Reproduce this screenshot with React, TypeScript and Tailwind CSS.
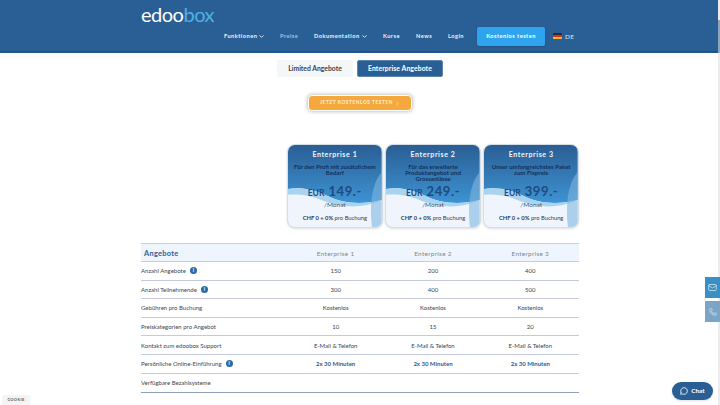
import { ChevronDown, ChevronRight, Mail, MessageCircle, Phone } from "lucide-react";

const plans = [
  { name: "Enterprise 1", text: "Für den Profi mit zusätzlichem Bedarf", price: "149.-" },
  { name: "Enterprise 2", text: "Für das erweiterte Produktangebot und Grossanlässe", price: "249.-" },
  { name: "Enterprise 3", text: "Unser umfangreichstes Paket zum Fixpreis", price: "399.-" },
];

const rows = [
  { label: "Anzahl Angebote", info: true, values: ["150", "200", "400"] },
  { label: "Anzahl Teilnehmende", info: true, values: ["300", "400", "500"] },
  { label: "Gebühren pro Buchung", values: ["Kostenlos", "Kostenlos", "Kostenlos"] },
  { label: "Preiskategorien pro Angebot", values: ["10", "15", "20"] },
  { label: "Kontakt zum edoobox Support", values: ["E-Mail & Telefon", "E-Mail & Telefon", "E-Mail & Telefon"] },
  { label: "Persönliche Online-Einführung", info: true, link: true, values: ["2x 30 Minuten", "2x 30 Minuten", "2x 30 Minuten"] },
  { label: "Verfügbare Bezahlsysteme", values: ["", "", ""] },
];

function NavItem({ label, caret, muted, width }: { label: string; caret?: boolean; muted?: boolean; width: string }) {
  return (
    <span className={`flex items-center justify-between ${width} ${muted ? "text-[#a9c1da]" : "text-[#eef4fa]"}`}>
      {label}
      {caret && <ChevronDown className="h-[7px] w-[7px]" strokeWidth={3} />}
    </span>
  );
}

function PlanCard({ name, text, price }: { name: string; text: string; price: string }) {
  return (
    <div className="relative h-[84px] flex-1 overflow-hidden rounded-lg border border-[#d5dde6] bg-[#f0f5fd] shadow-sm">
      <svg className="absolute inset-0 h-full w-full" viewBox="0 0 96 84" preserveAspectRatio="none">
        <defs>
          <linearGradient id="planBg" x1="0" y1="0" x2="0" y2="1">
            <stop offset="0" stopColor="#2a5e94" />
            <stop offset="1" stopColor="#3d93d3" />
          </linearGradient>
        </defs>
        <path d="M0 0H96V56C78 61 58 61 40 52C26 45 12 43 0 45Z" fill="url(#planBg)" />
        <path d="M0 45C12 43 26 45 40 52C58 61 78 61 96 56C76 66 54 64 36 57C22 51 10 50 0 51Z" fill="#a9d4f1" />
        <path d="M96 28C87 38 83 58 86 84H96Z" fill="#7fb6df" opacity="0.6" />
      </svg>
      <div className="relative flex h-full flex-col items-center px-1 pt-[4px] text-center">
        <div className="text-[7px] font-bold leading-[11px] tracking-[0.6px] text-[#f2f6fb]">{name}</div>
        <div className="mt-[4px] h-[20px] text-[6.1px] font-bold leading-[6px] text-[#14305a]">{text}</div>
        <div className="-mt-[1px] flex items-baseline gap-[4px] text-[#1f4a7e]">
          <span className="text-[8.5px] font-bold">EUR</span>
          <span className="text-[13px] font-bold leading-[17px] tracking-[0.6px]">{price}</span>
        </div>
        <div className="text-[6.5px] leading-[10px] text-[#45586f]">/Monat</div>
        <div className="mt-[2.5px] text-[5.8px] leading-[10px] text-[#2c3e50]">
          <b>CHF 0 + 0%</b> pro Buchung
        </div>
      </div>
    </div>
  );
}

export default function App() {
  return (
    <div className="relative h-[405px] w-[720px] overflow-hidden bg-white font-['Lato',sans-serif]">
      <header className="flex h-[53px] justify-center border-b-2 border-[#24558a] bg-[#2a5f95]">
        <div className="flex w-[438px] flex-col">
          <div className="h-[26px] pt-[1px] text-[20px] font-normal leading-[26px] tracking-[-0.5px] text-white">
            edoo<span className="text-[#4fb0e6]">box</span>
          </div>
          <nav className="mt-[1px] flex h-[19px] items-center justify-end gap-[15px] whitespace-nowrap pr-[5px] text-[5.6px] font-bold tracking-[0.5px]">
            <NavItem label="Funktionen" caret width="w-[41px]" />
            <NavItem label="Preise" muted width="w-[19px]" />
            <NavItem label="Dokumentation" caret width="w-[54px]" />
            <NavItem label="Kurse" width="w-[18px]" />
            <NavItem label="News" width="w-[17px]" />
            <NavItem label="Login" width="w-[18px]" />
            <span className="-ml-[4px] flex h-[19px] w-[68px] items-center justify-center rounded-[2px] bg-[#2ea3ee] text-white shadow">
              Kostenlos testen
            </span>
            <span className="-ml-[7px] flex w-[21px] items-center gap-[3px] text-[6.4px] font-normal text-[#dce8f3]">
              <span className="flex h-[6px] w-[9px] shrink-0 flex-col overflow-hidden rounded-[1px]">
                <span className="flex-1 bg-[#2b2b2b]" />
                <span className="flex-1 bg-[#d3312c]" />
                <span className="flex-1 bg-[#f5bd2e]" />
              </span>
              DE
            </span>
          </nav>
        </div>
      </header>

      <main className="mx-auto flex w-[438px] flex-col">
        <div className="mt-[7px] flex justify-center gap-[4px] text-[6.8px] font-bold">
          <span className="flex h-[17px] w-[76px] items-center justify-center rounded-[2px] bg-[#f5f6f7] text-[#3b4450]">
            Limited Angebote
          </span>
          <span className="flex h-[17px] w-[86px] items-center justify-center rounded-[2px] border border-[#5d85ad] bg-[#2a5f95] tracking-[0.1px] text-white">
            Enterprise Angebote
          </span>
        </div>

        <div className="mt-[18px] flex justify-center">
          <span className="flex h-[16px] w-[104px] items-center justify-center gap-[2px] rounded-[4px] border border-white bg-[#f5a83c] text-[4.8px] font-bold tracking-[0.55px] text-[#fdf0d8] shadow-[0_0_4px_rgba(0,0,0,0.35)]">
            JETZT KOSTENLOS TESTEN
            <ChevronRight className="h-[5px] w-[5px]" strokeWidth={3} />
          </span>
        </div>

        <div className="mt-[33px] flex gap-[2.5px] pl-[146px]">
          {plans.map((p) => (
            <PlanCard key={p.name} name={p.name} text={p.text} price={p.price} />
          ))}
        </div>

        <div className="mt-[15px] border-b border-[#8fa3bd] text-[6px] text-[#3c4650]">
          <div className="flex h-[19px] items-center border-y border-[#c3cfe0] bg-[#eff5fd] pt-[2px]">
            <div className="w-[146px] pl-[3px] text-[7.4px] font-bold tracking-[0.3px] text-[#2a5f95]">Angebote</div>
            {plans.map((p) => (
              <div key={p.name} className="flex-1 text-center text-[6.4px] tracking-[0.3px] text-[#7d868f]">
                {p.name}
              </div>
            ))}
          </div>
          {rows.map((r, i) => (
            <div
              key={r.label}
              className={`flex h-[18.6px] items-center ${i < rows.length - 1 ? "border-b border-[#c5c9e0]" : ""}`}
            >
              <div className="flex w-[146px] items-center gap-[4px]">
                {r.label}
                {r.info && (
                  <span className="flex h-[7px] w-[7px] items-center justify-center rounded-full bg-[#2a6aa6] text-[5px] font-bold leading-none text-white">
                    i
                  </span>
                )}
              </div>
              {r.values.map((v, j) => (
                <div key={j} className={`flex-1 text-center ${r.link ? "font-bold text-[#2a5f95]" : ""}`}>
                  {v}
                </div>
              ))}
            </div>
          ))}
        </div>
      </main>

      {/* scrollbar strip, then the floating widgets on top of it */}
      <div className="absolute right-0 top-0 h-full w-[2px] bg-[#ececec]">
        <div className="mt-[20px] h-[33px] bg-[#8fa5bc]" />
      </div>
      <div className="absolute right-0 top-[277px] flex flex-col gap-[3px]">
        <span className="flex h-[21px] w-[15px] items-center justify-center bg-[#3a8fc4]">
          <Mail className="h-[9px] w-[9px] text-[#d7e9f4]" />
        </span>
        <span className="flex h-[21px] w-[15px] items-center justify-center bg-[#7ba5c6]">
          <Phone className="h-[8px] w-[8px] text-[#dfeaf3]" />
        </span>
      </div>
      <span className="absolute left-[672px] top-[382px] flex h-[18px] w-[41px] items-center justify-center gap-[3px] rounded-full bg-[#2a5f95] text-[6.4px] font-bold text-white shadow">
        <MessageCircle className="h-[8px] w-[8px]" strokeWidth={2.5} />
        Chat
      </span>
      <span className="absolute left-[2px] top-[395px] flex h-[10px] w-[28px] items-center justify-center rounded-t-[3px] bg-[#f4f4f4] text-[4px] font-bold tracking-[0.3px] text-[#555]">
        COOKIE
      </span>
    </div>
  );
}
